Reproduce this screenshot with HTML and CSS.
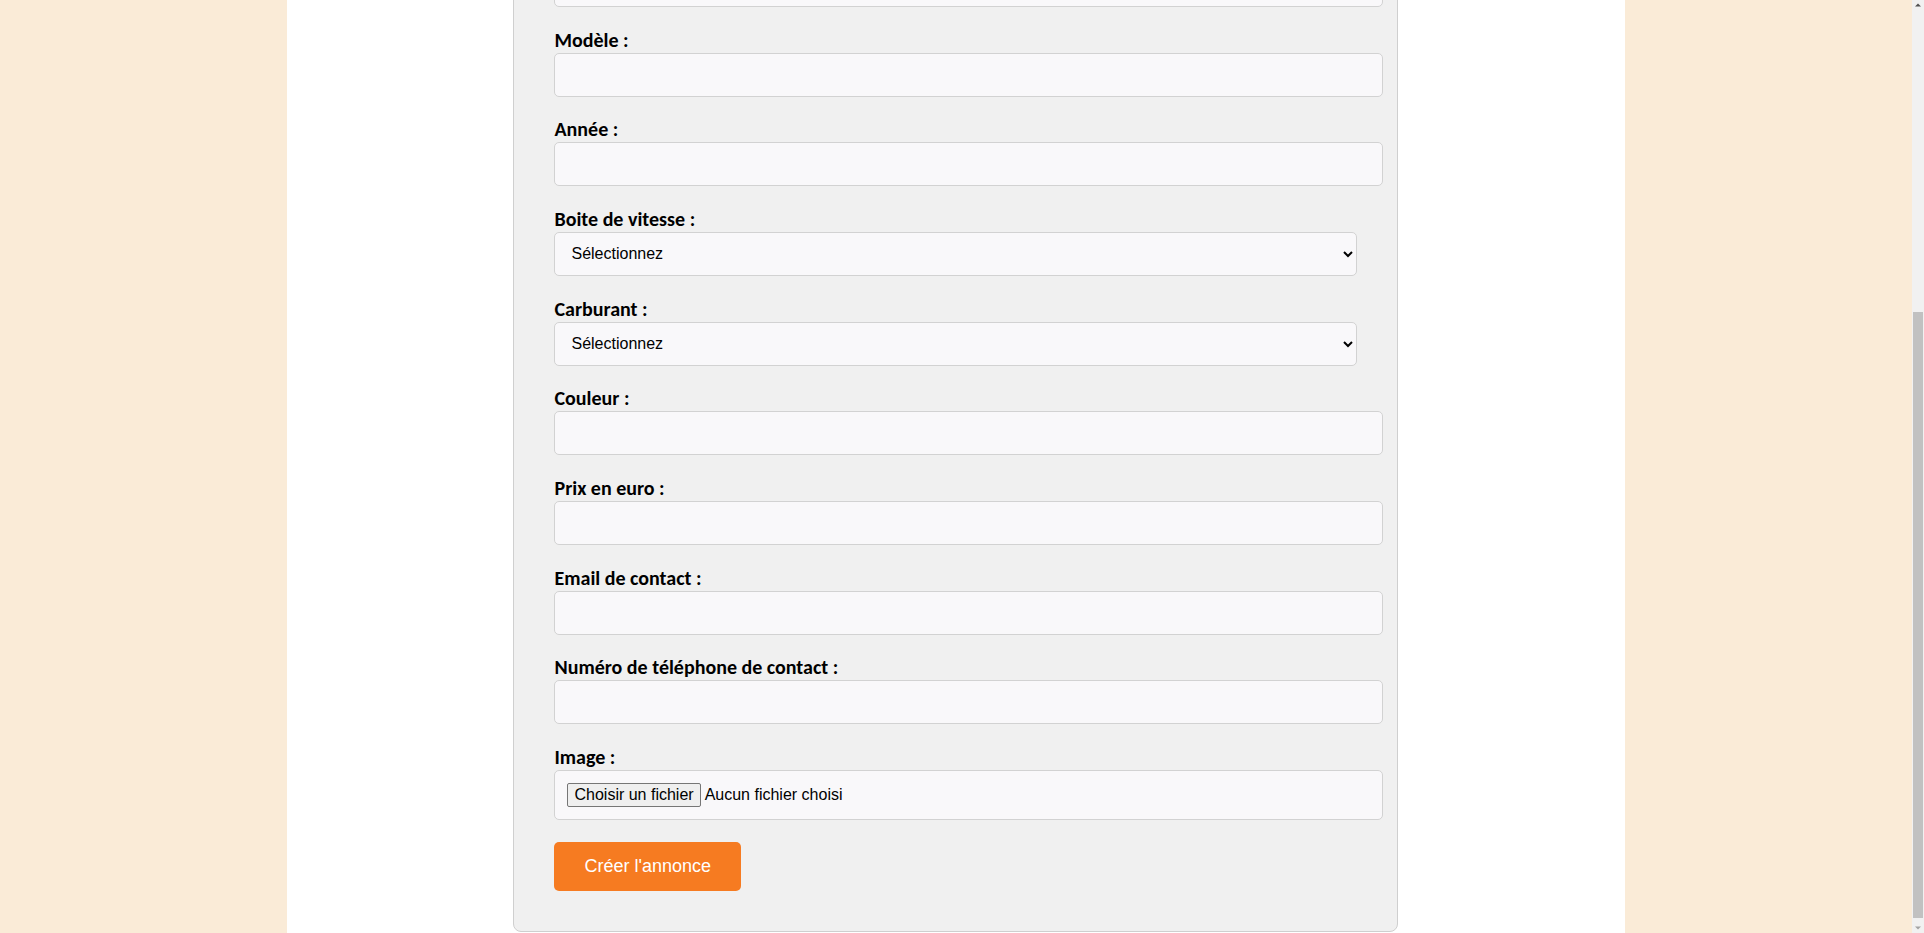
FILE: index.html
```html
<!DOCTYPE html>
<html lang="fr">
<head>
<meta charset="utf-8">
<title>Créer une annonce</title>
<link rel="stylesheet" href="styles.css">
</head>
<body>
<main class="page">
  <form class="card">
    <div class="field">
      <input class="text-input" type="text" aria-label="Marque">
    </div>
    <div class="field">
      <label class="label">Modèle :</label>
      <input class="text-input" type="text">
    </div>
    <div class="field">
      <label class="label">Année :</label>
      <input class="text-input" type="text">
    </div>
    <div class="field">
      <label class="label">Boite de vitesse :</label>
      <select class="select-input"><option>Sélectionnez</option></select>
    </div>
    <div class="field">
      <label class="label">Carburant :</label>
      <select class="select-input"><option>Sélectionnez</option></select>
    </div>
    <div class="field">
      <label class="label">Couleur :</label>
      <input class="text-input" type="text">
    </div>
    <div class="field">
      <label class="label">Prix en euro :</label>
      <input class="text-input" type="text">
    </div>
    <div class="field">
      <label class="label">Email de contact :</label>
      <input class="text-input" type="text">
    </div>
    <div class="field">
      <label class="label">Numéro de téléphone de contact :</label>
      <input class="text-input" type="text">
    </div>
    <div class="field">
      <label class="label">Image :</label>
      <div class="file-input"><span class="file-btn">Choisir un fichier</span><span class="file-name">Aucun fichier choisi</span></div>
    </div>
    <button class="submit" type="button">Créer l'annonce</button>
  </form>
</main>
<div class="scrollbar" aria-hidden="true">
  <svg class="arrow" width="12" height="10" viewBox="0 0 12 10"><path d="M3 6.5 L6 3.5 L9 6.5 Z" fill="#505050"/></svg>
  <div class="track"><div class="thumb"></div></div>
  <svg class="arrow" width="12" height="10" viewBox="0 0 12 10"><path d="M3 3.5 L6 6.5 L9 3.5 Z" fill="#a3a3a3"/></svg>
</div>
<script src="script.js"></script>
</body>
</html>
```
FILE: styles.css
```css
html {
  background: #faebd7;
}
body {
  margin: 0;
  padding-right: 12px;
  background: #faebd7;
  font-family: "Carlito", "Lato", "Liberation Sans", sans-serif;
  color: #000;
}
.page {
  width: 70%;
  margin: 0 auto;
  background: #fff;
  padding: 40px 0 1px;
}
.card {
  width: 803px;
  margin: 0 auto;
  padding: 40px;
  background: #f0f0f0;
  border: 1px solid #cfcfcf;
  border-radius: 8px;
}
.field {
  margin-bottom: 21.67px;
}
.label {
  display: block;
  font-weight: 700;
  font-size: 20px;
  line-height: 23px;
  margin-bottom: 1px;
}
.text-input,
.file-input {
  display: block;
  width: 100%;
  box-sizing: content-box;
  padding: 12px;
  border: 1px solid #d2d2d2;
  border-radius: 5px;
  background: #f9f8fa;
  font-family: "Liberation Sans", Arial, sans-serif;
  font-size: 16px;
  line-height: 18px;
  margin: 0;
}
.select-input {
  display: block;
  width: 100%;
  box-sizing: border-box;
  height: 44px;
  padding: 0 8px 0 12px;
  border: 1px solid #d2d2d2;
  border-radius: 5px;
  background: #f9f8fa;
  font-family: "Liberation Sans", Arial, sans-serif;
  font-size: 16px;
  color: #000;
  margin: 0;
}
.file-input {
  display: flex;
  align-items: center;
  line-height: 20px;
}
.file-btn {
  padding: 1px 6px;
  border: 1px solid #767676;
  border-radius: 2px;
  background: #efefef;
  line-height: 20px;
  margin-right: 4px;
}
.submit {
  display: block;
  padding: 14px 30px;
  border: none;
  border-radius: 5px;
  background: #f67b21;
  color: #fff;
  font-family: "Liberation Sans", Arial, sans-serif;
  font-size: 18px;
  line-height: 21px;
}
.scrollbar {
  position: fixed;
  top: 0;
  right: 0;
  bottom: 0;
  width: 12px;
  background: #f1f1f1;
  display: flex;
  flex-direction: column;
}
.arrow {
  display: block;
  flex: none;
}
.track {
  flex: 1;
  padding-top: 302px;
  padding-bottom: 5px;
  display: flex;
  flex-direction: column;
}
.thumb {
  flex: 1;
  margin: 0 1px;
  background: #c1c1c1;
}
```
FILE: script.js
```js
window.scrollTo(0, document.documentElement.scrollHeight);
```
